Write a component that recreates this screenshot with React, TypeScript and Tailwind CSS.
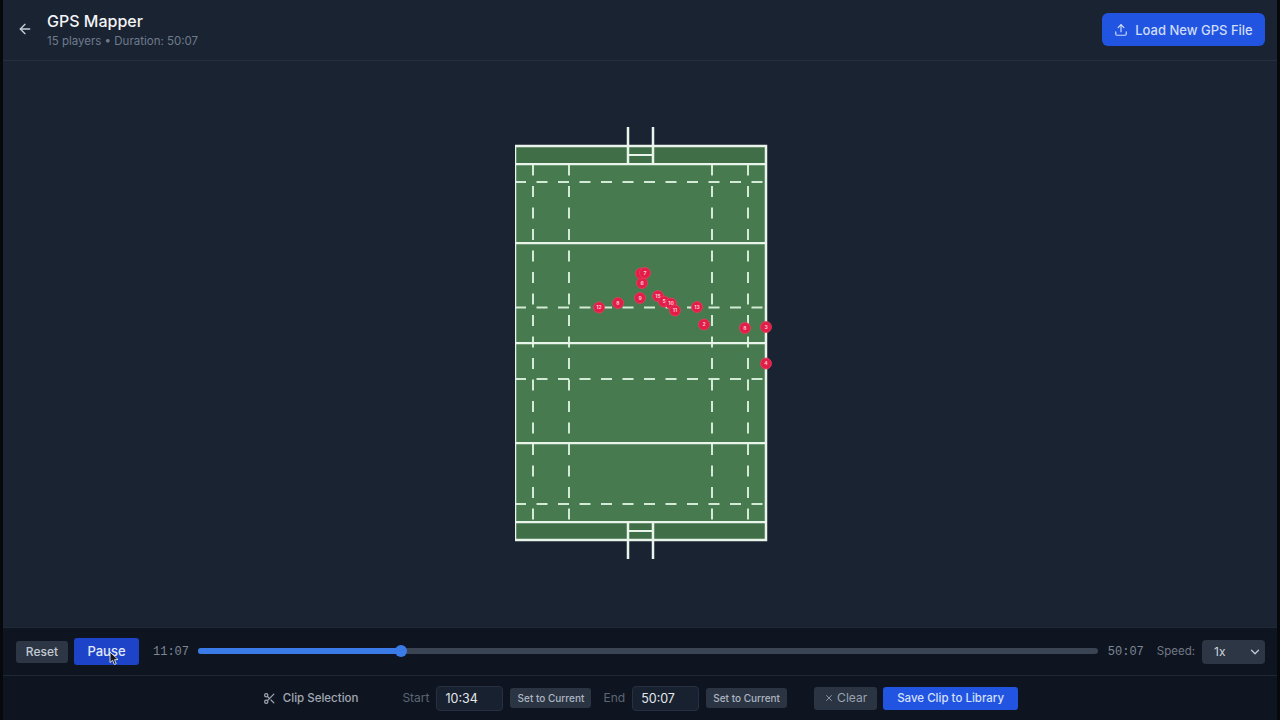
import { ArrowLeft, Upload, Scissors, ChevronDown, X } from "lucide-react";

const players: [number, number, string][] = [
  [84, 180.5, "12"],
  [103, 176, "8"],
  [125, 171, "9"],
  [127, 156, "6"],
  [126, 146.5, "1"],
  [130, 146, "7"],
  [143, 169, "15"],
  [149, 174.5, "5"],
  [156, 176.5, "10"],
  [160, 183.5, "11"],
  [182, 180, "13"],
  [189, 197.5, "2"],
  [230, 201, "8"],
  [251, 200, "3"],
  [251, 236.5, "4"],
];

function Pitch() {
  const line = "#e9f4ea";
  const dash = "#d3ead6";
  const hDash = [55, 180.5, 252, 377];
  const vDash = [18, 54, 197, 233];
  const solid = [37, 116, 216, 316, 395];
  return (
    <svg width="260" height="434" viewBox="0 0 260 434" className="block">
      <rect x="0" y="19" width="251" height="394" fill="#477a4e" />
      <rect x="0" y="19" width="251" height="18" fill="#3f6e47" />
      <rect x="0" y="395" width="251" height="18" fill="#3f6e47" />
      {vDash.map((x) => (
        <line key={x} x1={x} y1="37.5" x2={x} y2="395" stroke={dash} strokeWidth="2" strokeDasharray="11 10.5" />
      ))}
      {hDash.map((y) => (
        <line key={y} x1="0" y1={y} x2="250" y2={y} stroke={dash} strokeWidth="2" strokeDasharray="11 10.5" />
      ))}
      {solid.map((y) => (
        <line key={y} x1="0" y1={y} x2="251" y2={y} stroke={line} strokeWidth="2.25" />
      ))}
      <rect x="0" y="19" width="251" height="394" fill="none" stroke={line} strokeWidth="2.5" />
      <g stroke={line} strokeWidth="2.5" fill="none">
        <line x1="113" y1="0" x2="113" y2="37" />
        <line x1="138" y1="0" x2="138" y2="37" />
        <line x1="113" y1="28" x2="138" y2="28" strokeWidth="2" />
        <line x1="113" y1="395" x2="113" y2="432" />
        <line x1="138" y1="395" x2="138" y2="432" />
        <line x1="113" y1="404" x2="138" y2="404" strokeWidth="2" />
      </g>
      {players.map(([x, y, n], i) => (
        <g key={i}>
          <circle cx={x} cy={y} r="5.5" fill="#e11d48" stroke="#ec3f5f" strokeWidth="0.75" />
          <text x={x} y={y + 1.7} textAnchor="middle" fontSize="5" fontWeight="700" fill="#ffc9d3" fontFamily="Inter, sans-serif">
            {n}
          </text>
        </g>
      ))}
    </svg>
  );
}

function SetButton() {
  return (
    <button className="ml-[7px] h-5 w-[81px] rounded-[3px] bg-[#2a3442] text-[10px] font-medium text-[#aeb6c2]">Set to Current</button>
  );
}

function TimeInput({ value }: { value: string }) {
  return (
    <input
      readOnly
      value={value}
      className="ml-[7px] h-[25px] w-[67px] rounded border border-[#263040] bg-[#182130] pl-2 text-[12.5px] text-[#e5e7eb] outline-none"
    />
  );
}

export default function App() {
  return (
    <div className="flex h-[720px] w-[1280px] overflow-hidden bg-[#06080c] px-[3px] font-['Inter',sans-serif]">
      <div className="relative flex min-w-0 flex-1 flex-col bg-[#1a2332]">
        <header className="flex h-[61px] shrink-0 items-center justify-between border-b border-[#252f3e] pl-[14px] pr-3">
          <div className="flex items-center gap-[14px]">
            <ArrowLeft className="mt-[-2px] h-4 w-4 text-[#c7ced8]" strokeWidth={2} />
            <div className="-mt-[1px] flex flex-col">
              <div className="text-base leading-[22px] font-medium text-[#f3f4f6]">GPS Mapper</div>
              <div className="mt-[2px] text-[11.5px] leading-[15px] text-[#6f7b8d]">15 players • Duration: 50:07</div>
            </div>
          </div>
          <button className="-mt-[2px] flex h-[33px] w-[163px] items-center justify-center gap-[7px] rounded-md bg-[#2154e0] pt-px text-[13px] leading-5 font-medium text-[#cfdcfb]">
            <Upload className="h-[14px] w-[14px]" strokeWidth={2} />
            Load New GPS File
          </button>
        </header>

        <main className="flex min-h-0 flex-1 items-center justify-center">
          <div className="ml-[9px] -mt-[1px]">
            <Pitch />
          </div>
        </main>

        <div className="flex h-[48px] shrink-0 items-center border-t border-[#1f2835] bg-[#0f1520] pl-[13px] pr-3">
          <button className="h-[22px] w-[52px] rounded-[3px] bg-[#2c3644] text-xs font-medium text-[#c3c9d2]">Reset</button>
          <button className="ml-[6px] h-[27px] w-[65px] rounded-[3px] bg-[#1d44c8] text-[13px] font-medium text-[#e3e9fb]">Pause</button>
          <span className="ml-[14px] w-[35px] font-['Liberation_Mono',monospace] text-xs text-[#7d8694]">11:07</span>
          <div className="relative mx-[10px] -mt-px h-[6px] flex-1 rounded-full bg-[#3a4453]">
            <div className="h-full w-[22.6%] rounded-full bg-[#3b7be8]" />
            <div className="absolute top-1/2 left-[22.6%] h-3 w-3 -translate-x-1/2 -translate-y-1/2 rounded-full bg-[#3b7be8]" />
          </div>
          <span className="w-[35px] font-['Liberation_Mono',monospace] text-xs text-[#7d8694]">50:07</span>
          <span className="ml-[14px] text-[11.5px] text-[#6f7887]">Speed:</span>
          <div className="ml-[7px] flex h-[24px] w-[63px] items-center justify-between rounded bg-[#2c3644] pl-3 pr-[3px] text-xs text-[#d1d5db]">
            1x
            <ChevronDown className="h-[14px] w-[14px] text-[#c3c9d2]" strokeWidth={2.25} />
          </div>
        </div>

        <div className="flex h-[45px] shrink-0 items-center justify-center border-t border-[#1f2835] bg-[#0f1520] pl-px">
          <Scissors className="h-[13px] w-[13px] text-[#a2a9b4]" strokeWidth={2.25} />
          <span className="ml-[7px] text-[11.5px] leading-[18px] font-medium text-[#a2a9b4]">Clip Selection</span>
          <span className="ml-[44px] text-xs text-[#5d6675]">Start</span>
          <TimeInput value="10:34" />
          <SetButton />
          <span className="ml-[12px] text-xs text-[#5d6675]">End</span>
          <TimeInput value="50:07" />
          <SetButton />
          <button className="ml-[27px] flex h-[23px] w-[63px] items-center justify-center gap-[3px] rounded-[3px] bg-[#2a3442] text-xs text-[#9aa3b0]">
            <X className="h-[10px] w-[10px]" strokeWidth={2} />
            Clear
          </button>
          <button className="ml-[6px] h-[23px] w-[135px] rounded-[3px] bg-[#2154e0] text-[11.5px] leading-[18px] font-medium text-[#d5e0fb]">Save Clip to Library</button>
        </div>

        <svg width="11" height="15" viewBox="0 0 11 15" className="absolute top-[651px] left-[106px]">
          <path d="M1 1 L1 11.5 L3.6 9.3 L5.4 13.5 L7.2 12.7 L5.5 8.7 L9 8.5 Z" fill="#15171c" stroke="#e5e7eb" strokeWidth="0.9" />
        </svg>
      </div>
    </div>
  );
}
